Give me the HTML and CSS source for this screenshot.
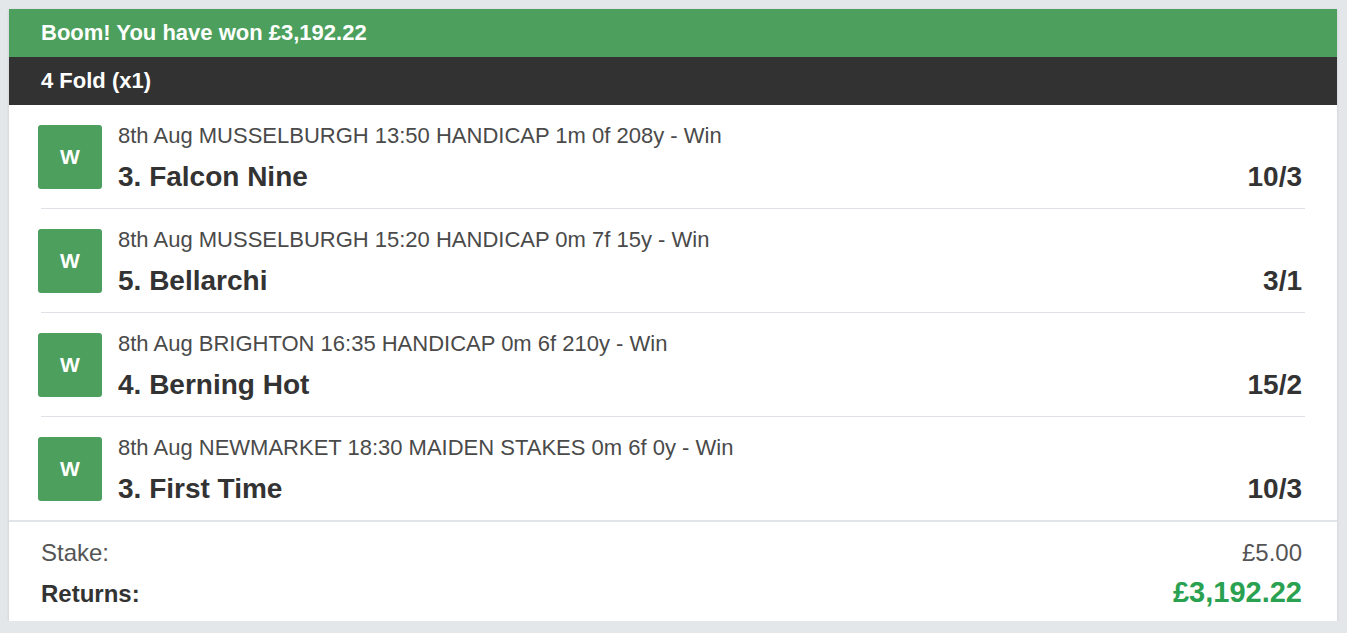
FILE: index.html
```html
<!DOCTYPE html>
<html lang="en">
<head>
  <meta charset="UTF-8" />
  <meta name="viewport" content="width=device-width, initial-scale=1.0" />
  <title>Bet Receipt</title>
  <link rel="stylesheet" href="styles.css">
</head>
<body>
  <div class="bet-card">
    <div class="win-banner">Boom! You have won £3,192.22</div>
    <div class="bet-type">4 Fold (x1)</div>

    <div class="selections">
      <div class="selection">
        <div class="result-badge">W</div>
        <div class="selection-info">
          <div class="race">8th Aug MUSSELBURGH 13:50 HANDICAP 1m 0f 208y - Win</div>
          <div class="runner-row">
            <span class="runner">3. Falcon Nine</span>
            <span class="odds">10/3</span>
          </div>
        </div>
      </div>

      <div class="selection">
        <div class="result-badge">W</div>
        <div class="selection-info">
          <div class="race">8th Aug MUSSELBURGH 15:20 HANDICAP 0m 7f 15y - Win</div>
          <div class="runner-row">
            <span class="runner">5. Bellarchi</span>
            <span class="odds">3/1</span>
          </div>
        </div>
      </div>

      <div class="selection">
        <div class="result-badge">W</div>
        <div class="selection-info">
          <div class="race">8th Aug BRIGHTON 16:35 HANDICAP 0m 6f 210y - Win</div>
          <div class="runner-row">
            <span class="runner">4. Berning Hot</span>
            <span class="odds">15/2</span>
          </div>
        </div>
      </div>

      <div class="selection">
        <div class="result-badge">W</div>
        <div class="selection-info">
          <div class="race">8th Aug NEWMARKET 18:30 MAIDEN STAKES 0m 6f 0y - Win</div>
          <div class="runner-row">
            <span class="runner">3. First Time</span>
            <span class="odds">10/3</span>
          </div>
        </div>
      </div>
    </div>

    <div class="totals">
      <div class="total-row">
        <span>Stake:</span>
        <span>£5.00</span>
      </div>
      <div class="total-row returns">
        <span>Returns:</span>
        <span class="returns-value">£3,192.22</span>
      </div>
    </div>
  </div>
</body>
</html>
```

FILE: styles.css
```css
body {
  font-family: "Liberation Sans", Arial, sans-serif;
  background: #e4e7ea;
  margin: 0;
  padding: 9px 10px 0 9px;
  color: #333;
}
.bet-card {
  background: #fff;
  box-shadow: 0 1px 3px rgba(0,0,0,0.12);
}
.win-banner, .bet-type {
  height: 48px;
  display: flex;
  align-items: center;
  padding: 0 32px;
  color: #fff;
  font-weight: bold;
  font-size: 22px;
}
.win-banner {
  background: #4c9f5c;
}
.bet-type {
  background: #323232;
}
.selections {
  padding: 0 32px;
}
.selection {
  display: flex;
  align-items: center;
  padding: 20px 0 19px;
  border-bottom: 1px solid #dfe3e7;
}
.selection:last-child {
  border-bottom: none;
}
.result-badge {
  flex: none;
  width: 64px;
  height: 64px;
  margin-left: -3px;
  margin-right: 16px;
  border-radius: 3px;
  background: #4c9f5c;
  color: #fff;
  font-weight: bold;
  font-size: 21px;
  display: flex;
  align-items: center;
  justify-content: center;
}
.selection-info {
  flex: 1;
}
.race {
  font-size: 22px;
  color: #4a4a4a;
  line-height: 22px;
}
.runner-row {
  display: flex;
  justify-content: space-between;
  align-items: baseline;
  margin-top: 17px;
  margin-right: 3px;
  font-size: 28px;
  font-weight: bold;
  line-height: 25px;
}
.totals {
  border-top: 2px solid #e1e5e9;
  padding: 15px 35px 11px 32px;
}
.total-row {
  display: flex;
  justify-content: space-between;
  align-items: baseline;
  font-size: 24px;
  color: #555;
  line-height: 32px;
}
.total-row.returns {
  margin-top: 7px;
  font-weight: bold;
  color: #333;
}
.returns-value {
  color: #29a151;
  font-size: 29px;
}
```
